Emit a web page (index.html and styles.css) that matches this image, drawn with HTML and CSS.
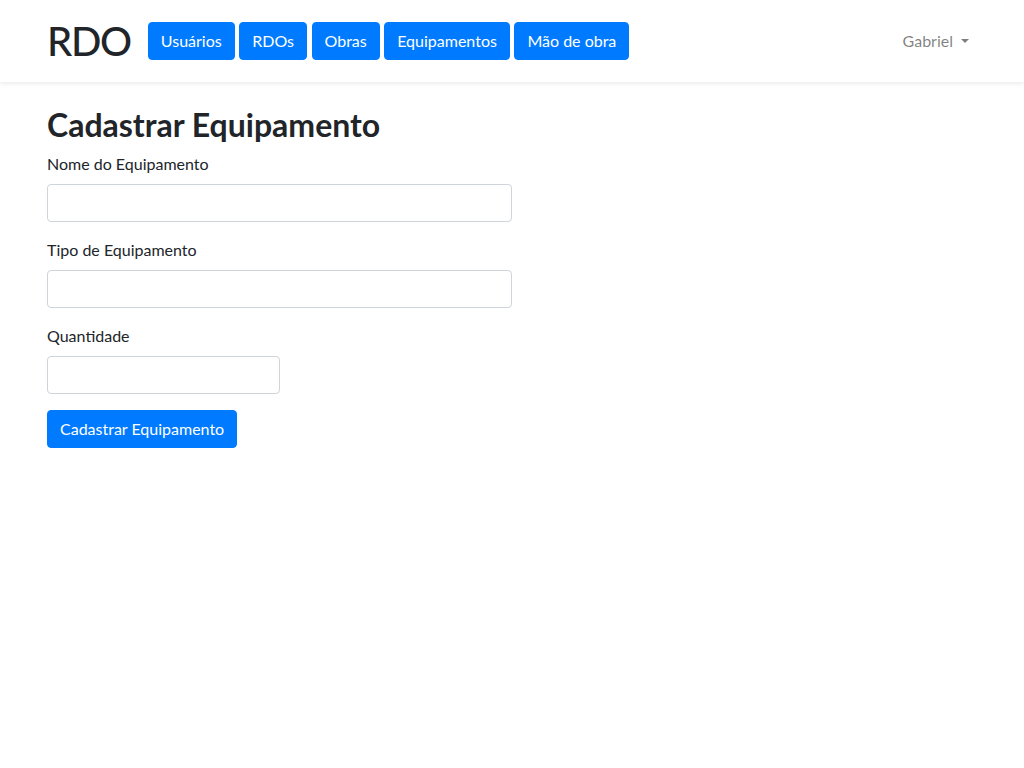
FILE: index.html
```html
<!DOCTYPE html>
<html lang="pt-BR">
<head>
<meta charset="utf-8">
<title>RDO - Cadastrar Equipamento</title>
<link rel="stylesheet" href="styles.css">
</head>
<body>
<nav class="navbar">
  <div class="container nav-inner">
    <a class="brand" href="#">RDO</a>
    <div class="nav-buttons">
      <a class="btn btn-primary" href="#">Usuários</a>
      <a class="btn btn-primary" href="#">RDOs</a>
      <a class="btn btn-primary" href="#">Obras</a>
      <a class="btn btn-primary" href="#">Equipamentos</a>
      <a class="btn btn-primary" href="#">Mão de obra</a>
    </div>
    <a class="user-link" href="#">Gabriel<span class="caret"></span></a>
  </div>
</nav>
<main class="container content">
  <h2 class="title">Cadastrar Equipamento</h2>
  <form>
    <div class="form-group">
      <label for="nome">Nome do Equipamento</label>
      <input id="nome" class="form-control w-50" type="text">
    </div>
    <div class="form-group">
      <label for="tipo">Tipo de Equipamento</label>
      <input id="tipo" class="form-control w-50" type="text">
    </div>
    <div class="form-group">
      <label for="qtd">Quantidade</label>
      <input id="qtd" class="form-control w-25" type="number">
    </div>
    <button type="submit" class="btn btn-primary">Cadastrar Equipamento</button>
  </form>
</main>
</body>
</html>
```
FILE: styles.css
```css
* { box-sizing: border-box; }
html, body { margin: 0; padding: 0; }
body {
  font-family: "Lato", "Noto Sans", sans-serif;
  font-size: 16px;
  line-height: 1.5;
  color: #212529;
  background: #fff;
}
a { text-decoration: none; }
.container {
  width: 960px;
  margin: 0 auto;
  padding: 0 15px;
}
.navbar {
  background: #fff;
  box-shadow: 0 2px 4px rgba(0,0,0,.075);
  height: 82px;
  display: flex;
  align-items: center;
}
.nav-inner {
  display: flex;
  align-items: center;
}
.brand {
  font-size: 40px;
  font-weight: 500;
  letter-spacing: -1.3px;
  color: #212529;
  line-height: 1.5;
  margin-right: 17px;
}
.nav-buttons {
  display: flex;
  gap: 4.5px;
  flex: 1;
}
.btn {
  display: inline-block;
  font-family: inherit;
  font-size: 16px;
  line-height: 1.5;
  padding: 6px 12px;
  border: 1px solid transparent;
  border-radius: 4px;
  cursor: pointer;
}
.btn-primary {
  color: #fff;
  background: #007bff;
  border-color: #007bff;
}
.user-link {
  color: rgba(0,0,0,.5);
  padding: 8px;
}
.caret {
  display: inline-block;
  margin-left: 0.5em;
  vertical-align: 0.255em;
  border-top: 0.3em solid;
  border-right: 0.3em solid transparent;
  border-left: 0.3em solid transparent;
}
.content { padding-top: 24px; }
.title {
  font-size: 32px;
  font-weight: 700;
  line-height: 1.2;
  margin: 0 0 8px;
}
.form-group { margin-bottom: 16px; }
label {
  display: block;
  margin-bottom: 8px;
}
.form-control {
  display: block;
  height: 38px;
  padding: 6px 12px;
  font-family: inherit;
  font-size: 16px;
  color: #495057;
  background: #fff;
  border: 1px solid #ced4da;
  border-radius: 4px;
}
.w-50 { width: 50%; }
.w-25 { width: 25%; }
```
